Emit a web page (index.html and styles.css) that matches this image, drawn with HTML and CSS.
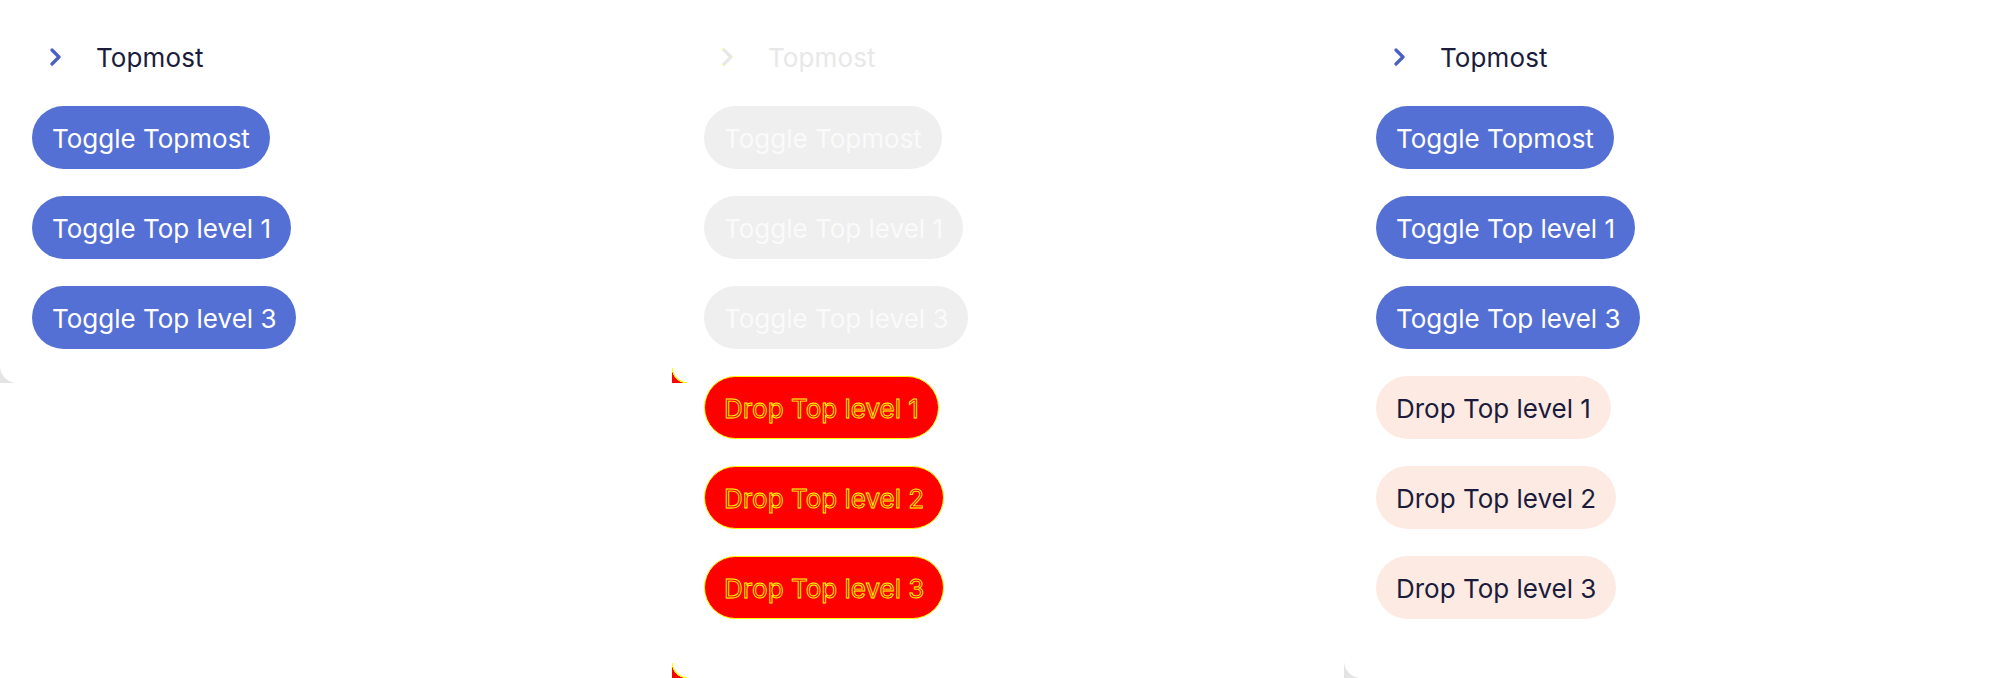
FILE: index.html
```html
<!DOCTYPE html>
<html>
<head>
<meta charset="utf-8">
<link rel="stylesheet" href="styles.css">
</head>
<body>
<div class="panels">
  <section class="panel">
    <div class="backdrop">
      <div class="card card-short">
        <div class="title-row">
          <svg class="chevron" viewBox="0 0 14 18" width="14" height="18"><path d="M3 2 L10 9 L3 16" fill="none" stroke="currentColor" stroke-width="3.2" stroke-linecap="round" stroke-linejoin="round"/></svg>
          <span class="title">Topmost</span>
        </div>
        <div class="buttons">
          <button class="btn btn-blue">Toggle Topmost</button>
          <button class="btn btn-blue">Toggle Top level 1</button>
          <button class="btn btn-blue">Toggle Top level 3</button>
        </div>
      </div>
    </div>
  </section>

  <section class="panel panel-diff">
    <div class="card card-diff">
      <div class="title-row">
        <svg class="chevron chevron-diff" viewBox="0 0 14 18" width="14" height="18"><path d="M3 2 L10 9 L3 16" fill="none" stroke="#e8e8e8" stroke-width="3.2" stroke-linecap="round" stroke-linejoin="round"/><path d="M1.4 2.2 L2.6 0.8" stroke="#ffff00" stroke-width="1"/><path d="M1.4 15.8 L2.6 17.2" stroke="#ffff00" stroke-width="1"/><path d="M10.5 8 L11.3 9" stroke="#ffff00" stroke-width="0.8"/></svg>
        <span class="title">Topmost</span>
      </div>
      <div class="buttons">
        <button class="btn btn-faded">Toggle Topmost</button>
        <button class="btn btn-faded">Toggle Top level 1</button>
        <button class="btn btn-faded">Toggle Top level 3</button>
        <button class="btn btn-red">Drop Top level 1</button>
        <button class="btn btn-red">Drop Top level 2</button>
        <button class="btn btn-red">Drop Top level 3</button>
      </div>
    </div>
    <span class="corner-mark corner-mark-1"></span>
    <span class="corner-mark corner-mark-2"></span>
  </section>

  <section class="panel">
    <div class="backdrop">
      <div class="card card-tall">
        <div class="title-row">
          <svg class="chevron" viewBox="0 0 14 18" width="14" height="18"><path d="M3 2 L10 9 L3 16" fill="none" stroke="currentColor" stroke-width="3.2" stroke-linecap="round" stroke-linejoin="round"/></svg>
          <span class="title">Topmost</span>
        </div>
        <div class="buttons">
          <button class="btn btn-blue">Toggle Topmost</button>
          <button class="btn btn-blue">Toggle Top level 1</button>
          <button class="btn btn-blue">Toggle Top level 3</button>
          <button class="btn btn-peach">Drop Top level 1</button>
          <button class="btn btn-peach">Drop Top level 2</button>
          <button class="btn btn-peach">Drop Top level 3</button>
        </div>
      </div>
    </div>
  </section>
</div>
</body>
</html>
```

FILE: styles.css
```css
* { box-sizing: border-box; }

html, body {
  margin: 0;
  padding: 0;
  background: #ffffff;
  font-family: Inter, "Noto Sans", sans-serif;
}

.panels {
  display: flex;
  width: 2016px;
  height: 678px;
  overflow: hidden;
}

.panel {
  position: relative;
  width: 672px;
  flex: 0 0 672px;
  height: 678px;
}

.backdrop {
  background: linear-gradient(90deg, #e4e4e4, #f2f2f2);
}

.card {
  background: #ffffff;
  border-bottom-left-radius: 17px;
  padding: 36px 0 34px 32px;
}

.card-tall {
  height: 678px;
}

.title-row {
  display: flex;
  align-items: center;
  height: 42px;
  margin-bottom: 28px;
}

.chevron {
  color: #4a5fc4;
  margin-left: 17px;
}

.title {
  margin-left: 33px;
  font-size: 26px;
  color: #1b1c3b;
  font-weight: 400;
  letter-spacing: 0.1px;
}

.buttons {
  display: flex;
  flex-direction: column;
  align-items: flex-start;
  gap: 27px;
}

.btn {
  height: 63px;
  border: none;
  border-radius: 32px;
  padding: 2px 20px 0;
  font-family: Inter, "Noto Sans", sans-serif;
  font-size: 26px;
  font-weight: 400;
  letter-spacing: 0;
  line-height: 61px;
  white-space: nowrap;
}

.btn-blue {
  background: #5570d5;
  color: #ffffff;
}

.btn-peach {
  background: #fdebe3;
  color: #1b1c3b;
}

.btn-faded {
  background: #efefef;
  color: #fafafa;
}

.card-diff .title {
  color: #e8e8e8;
}

.btn-red {
  background: #ff0000;
  color: #ff0000;
  border: 1px solid #ffff00;
  line-height: 59px;
  padding: 2px 19px 0;
  -webkit-text-stroke: 0.9px #ffff00;
}

.corner-mark {
  position: absolute;
  left: 0;
  width: 15px;
  height: 15px;
  background: radial-gradient(circle at 100% 0, transparent 14px, #ffff00 14px, #ffff00 15px, #ff0000 15.5px);
}

.corner-mark-1 { top: 368px; }
.corner-mark-2 { top: 663px; }
```
